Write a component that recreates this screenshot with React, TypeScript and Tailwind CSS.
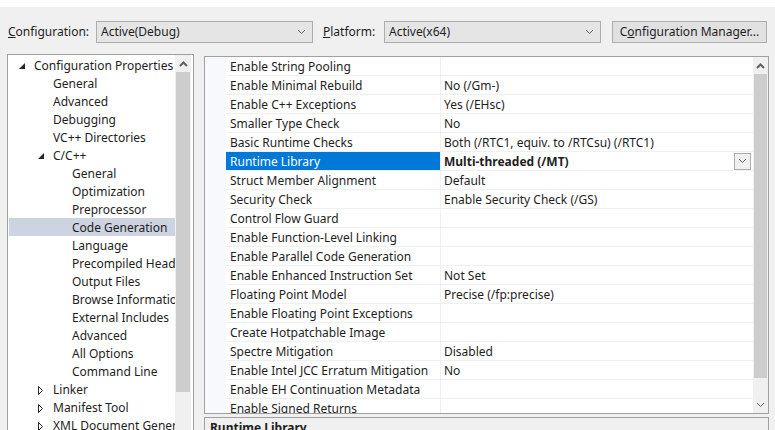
import React from 'react'

// Property Pages dialog (Visual Studio) — C/C++ > Code Generation
type TreeItem = { label: string; level: 0 | 1 | 2; state?: 'open' | 'closed'; selected?: boolean }

const TREE: TreeItem[] = [
  { label: 'Configuration Properties', level: 0, state: 'open' },
  { label: 'General', level: 1 },
  { label: 'Advanced', level: 1 },
  { label: 'Debugging', level: 1 },
  { label: 'VC++ Directories', level: 1 },
  { label: 'C/C++', level: 1, state: 'open' },
  { label: 'General', level: 2 },
  { label: 'Optimization', level: 2 },
  { label: 'Preprocessor', level: 2 },
  { label: 'Code Generation', level: 2, selected: true },
  { label: 'Language', level: 2 },
  { label: 'Precompiled Headers', level: 2 },
  { label: 'Output Files', level: 2 },
  { label: 'Browse Information', level: 2 },
  { label: 'External Includes', level: 2 },
  { label: 'Advanced', level: 2 },
  { label: 'All Options', level: 2 },
  { label: 'Command Line', level: 2 },
  { label: 'Linker', level: 1, state: 'closed' },
  { label: 'Manifest Tool', level: 1, state: 'closed' },
  { label: 'XML Document Generator', level: 1, state: 'closed' },
]

const INDENT = ['pl-[6px]', 'pl-[25px]', 'pl-[44px]']

const PROPS: [string, string][] = [
  ['Enable String Pooling', ''],
  ['Enable Minimal Rebuild', 'No (/Gm-)'],
  ['Enable C++ Exceptions', 'Yes (/EHsc)'],
  ['Smaller Type Check', 'No'],
  ['Basic Runtime Checks', 'Both (/RTC1, equiv. to /RTCsu) (/RTC1)'],
  ['Runtime Library', 'Multi-threaded (/MT)'],
  ['Struct Member Alignment', 'Default'],
  ['Security Check', 'Enable Security Check (/GS)'],
  ['Control Flow Guard', ''],
  ['Enable Function-Level Linking', ''],
  ['Enable Parallel Code Generation', ''],
  ['Enable Enhanced Instruction Set', 'Not Set'],
  ['Floating Point Model', 'Precise (/fp:precise)'],
  ['Enable Floating Point Exceptions', ''],
  ['Create Hotpatchable Image', ''],
  ['Spectre Mitigation', 'Disabled'],
  ['Enable Intel JCC Erratum Mitigation', 'No'],
  ['Enable EH Continuation Metadata', ''],
  ['Enable Signed Returns', ''],
]

const SELECTED_PROP = 5

function Chevron({ up = false, className = '' }: { up?: boolean; className?: string }) {
  return (
    <svg width="9" height="6" viewBox="0 0 9 6" className={className}>
      <polyline
        points={up ? '1,5 4.5,1.5 8,5' : '1,1 4.5,4.5 8,1'}
        fill="none"
        stroke="currentColor"
        strokeWidth={up ? 2 : 1}
      />
    </svg>
  )
}

function Combo({ value, width }: { value: string; width: string }) {
  return (
    <div className={`${width} h-[22px] flex items-center justify-between pl-[4px] pr-[6px] pt-[1px] bg-[#e5e5e5] border border-[#adadad]`}>
      <span>{value}</span>
      <Chevron className="text-[#606060]" />
    </div>
  )
}

function Arrow({ state }: { state?: 'open' | 'closed' }) {
  if (state === 'open')
    return (
      <svg width="6" height="6" viewBox="0 0 6 6">
        <polygon points="6,0 6,6 0,6" fill="#262626" />
      </svg>
    )
  if (state === 'closed')
    return (
      <svg width="6" height="9" viewBox="0 0 6 9">
        <polygon points="0.5,0.5 4.5,4.5 0.5,8.5" fill="none" stroke="#262626" />
      </svg>
    )
  return null
}

function ScrollArrow({ up }: { up?: boolean }) {
  return (
    <div className="h-[17px] flex items-center justify-center text-[#606060] shrink-0">
      <Chevron up={up} />
    </div>
  )
}

export default function App() {
  return (
    <div
      className="w-[775px] h-[430px] overflow-hidden bg-[#f0f0f0] text-[12px] text-[#1e1e1e] leading-none"
      style={{ fontFamily: '"Noto Sans", "Open Sans", sans-serif' }}
    >
      <div className="h-[7px] bg-white" />

      {/* toolbar */}
      <div className="flex items-center pl-[8px] mt-[13px] h-[23px]">
        <span className="w-[88px] pt-[1px]">
          <u>C</u>onfiguration:
        </span>
        <Combo value="Active(Debug)" width="w-[217px]" />
        <span className="ml-[10px] w-[61px] pt-[1px]">
          <u>P</u>latform:
        </span>
        <Combo value="Active(x64)" width="w-[217px]" />
        <button className="ml-[11px] w-[155px] h-[22px] bg-[#e1e1e1] border border-[#adadad] text-center pt-[1px]">
          C<u>o</u>nfiguration Manager...
        </button>
      </div>

      <div className="flex pl-[7px] mt-[11px] gap-[10px]">
        {/* tree */}
        <div className="w-[187px] h-[400px] bg-white border border-[#a0a0a0] flex">
          <div className="flex-1 pt-[1px] overflow-hidden">
            {TREE.map((t, i) => (
              <div
                key={i}
                className={`h-[18px] flex items-center whitespace-nowrap ml-[1px] pt-[2px] ${INDENT[t.level]} ${t.selected ? 'bg-[#cdd3e0]' : ''}`}
              >
                <span className="w-[19px] shrink-0 flex justify-end pr-[9px]">
                  <Arrow state={t.state} />
                </span>
                <span>{t.label}</span>
              </div>
            ))}
          </div>
          <div className="w-[16px] mr-[2px] bg-[#f0f0f0] flex flex-col">
            <ScrollArrow up />
            <div className="h-[320px] mx-[1px] bg-[#cdcdcd]" />
          </div>
        </div>

        {/* right side */}
        <div className="w-[565px] mt-[2px] flex flex-col gap-[3px]">
          <div className="h-[358px] bg-white border border-[#a0a0a0] flex">
            <div className="w-[21px] bg-[#f7f9fc]" />
            <div className="flex-1 overflow-hidden">
              {PROPS.map(([name, value], i) => {
                const sel = i === SELECTED_PROP
                return (
                  <div key={i} className="h-[19px] flex border-b border-[#eef0f4]">
                    <div
                      className={`w-[214px] pl-[4px] pt-[2px] flex items-center whitespace-nowrap ${sel ? 'bg-[#0078d7] text-white' : ''}`}
                    >
                      {name}
                    </div>
                    <div className="flex-1 border-l border-[#eef0f4] pl-[3px] flex items-center justify-between whitespace-nowrap">
                      <span className={`pt-[2px] ${sel ? 'font-bold' : ''}`}>{value}</span>
                      {sel && (
                        <div className="w-[17px] h-[17px] mr-[2px] bg-[#f0f0f0] border border-[#adadad] flex items-center justify-center text-[#606060]">
                          <Chevron />
                        </div>
                      )}
                    </div>
                  </div>
                )
              })}
            </div>
            <div className="w-[15px] bg-[#f0f0f0] flex flex-col">
              <ScrollArrow up />
              <div className="h-[304px] mx-[1px] bg-[#cdcdcd]" />
              <div className="flex-1" />
              <ScrollArrow />
            </div>
          </div>
          <div className="h-[40px] border border-[#a0a0a0] pl-[5px] pt-[4px]">
            <span className="font-bold">Runtime Library</span>
          </div>
        </div>
      </div>
    </div>
  )
}
